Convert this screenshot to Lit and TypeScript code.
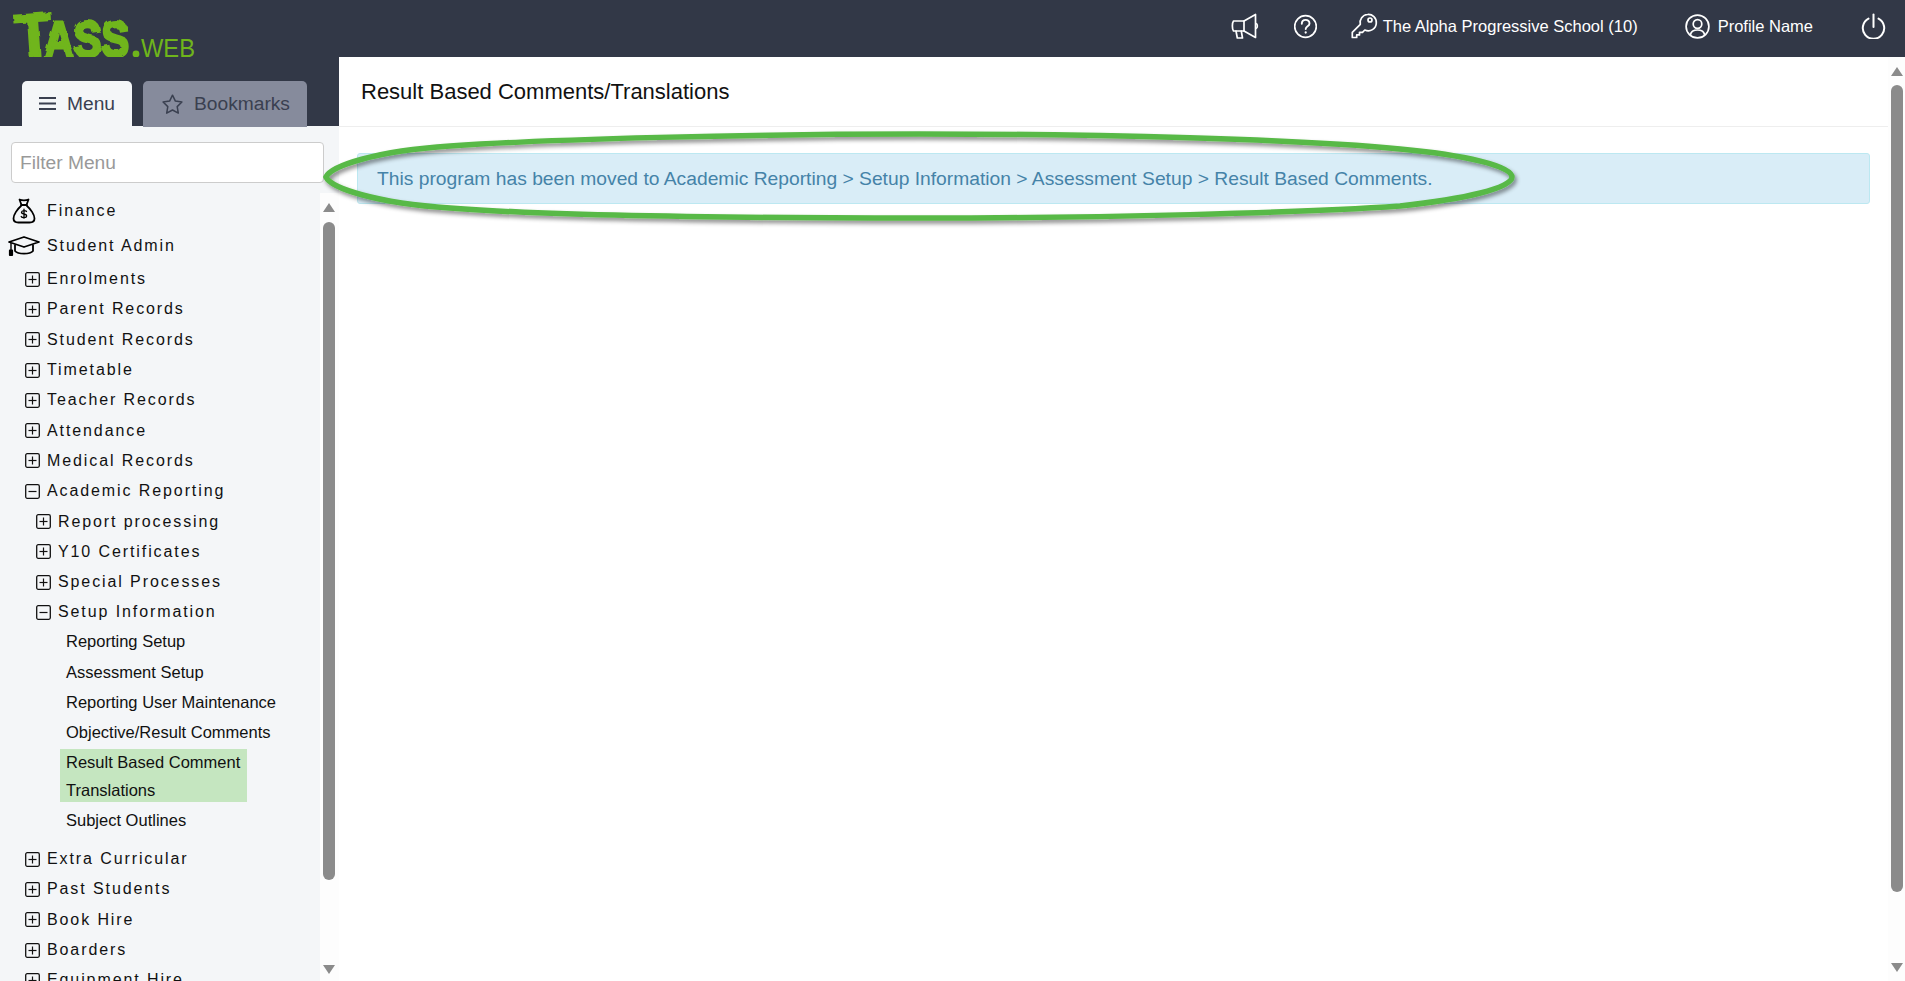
import { LitElement, html, css, svg } from "lit";
import { customElement } from "lit/decorators.js";

type Row = { t: string; k: "l1" | "l2" | "leaf" | "cur"; open?: boolean; gap?: boolean };

const rows: Row[] = [
  { t: "Enrolments", k: "l1" },
  { t: "Parent Records", k: "l1" },
  { t: "Student Records", k: "l1" },
  { t: "Timetable", k: "l1" },
  { t: "Teacher Records", k: "l1" },
  { t: "Attendance", k: "l1" },
  { t: "Medical Records", k: "l1" },
  { t: "Academic Reporting", k: "l1", open: true },
  { t: "Report processing", k: "l2" },
  { t: "Y10 Certificates", k: "l2" },
  { t: "Special Processes", k: "l2" },
  { t: "Setup Information", k: "l2", open: true },
  { t: "Reporting Setup", k: "leaf" },
  { t: "Assessment Setup", k: "leaf" },
  { t: "Reporting User Maintenance", k: "leaf" },
  { t: "Objective/Result Comments", k: "leaf" },
  { t: "Result Based Comment Translations", k: "cur" },
  { t: "Subject Outlines", k: "leaf" },
  { t: "Extra Curricular", k: "l1", gap: true },
  { t: "Past Students", k: "l1" },
  { t: "Book Hire", k: "l1" },
  { t: "Boarders", k: "l1" },
  { t: "Equipment Hire", k: "l1" },
];

const box = (open?: boolean) => html`<svg class="box" width="15" height="15" viewBox="0 0 15 15" fill="none" stroke="#111">
  <rect x=".7" y=".7" width="13.6" height="13.6" rx="1.5" stroke-width="1.3"></rect>
  <path d="M3.5 7.5h8" stroke-width="1.2"></path>
  ${open ? "" : svg`<path d="M7.5 3.5v8" stroke-width="1.2"></path>`}
</svg>`;

@customElement("app-root")
export class AppRoot extends LitElement {
  static styles = css`
    :host { display: block; position: relative; height: 981px; width: 1905px; overflow: hidden;
      font-family: "Liberation Sans", Arial, sans-serif; background: #fff; }
    .top { height: 57px; background: #323847; display: flex; align-items: center; color: #fff; }
    .logo { display: block; margin-left: 12px; align-self: flex-start; overflow: visible; }
    .logo text { font-family: "Liberation Sans", Arial, sans-serif; }
    .tools { margin-left: auto; display: flex; align-items: center; font-size: 16.5px; height: 100%; box-sizing: border-box; padding-bottom: 5px; }
    .tools svg { display: block; fill: none; stroke: #fff; stroke-width: 1.7; stroke-linecap: round; stroke-linejoin: round; }
    .megaphone { margin-right: 35px; }
    .help { margin-right: 34px; }
    .key { margin-right: 5px; }
    .school { margin-right: 47px; }
    .user { margin-right: 8px; }
    .name { margin-right: 48px; }
    .power { margin-right: 19px; }
    .body { display: flex; height: 924px; }
    .side { width: 339px; flex: none; display: flex; flex-direction: column; background: #f4f6f8; }
    .tabs { height: 69px; background: #323847; display: flex; align-items: flex-end; padding-left: 22px; gap: 11px; flex: none; }
    .tab { height: 45px; display: flex; align-items: center; box-sizing: border-box; border-radius: 5px 5px 0 0; font-size: 19.2px; color: #3a4050; }
    .tab.on { width: 110px; background: #f4f6f8; padding-left: 17px; gap: 11px; }
    .tab.off { width: 164px; height: 46px; margin-bottom: -1px; background: #868b9c; padding-left: 19px; gap: 11px; }
    .filter { height: 67px; flex: none; box-sizing: border-box; padding: 16px 15px 0 11px; }
    .filter input { display: block; box-sizing: border-box; width: 100%; height: 41px; border: 1px solid #ccc; border-radius: 4px;
      background: #fff; padding: 0 8px; font: 19.2px "Liberation Sans", Arial, sans-serif; outline: none; color: #333; }
    .filter input::placeholder { color: #999; opacity: 1; }
    .lower { flex: 1; min-height: 0; display: flex; }
    .list { width: 320px; flex: none; overflow: hidden; color: #111; font-size: 16px; }
    .item { display: flex; align-items: center; white-space: nowrap; letter-spacing: 1.9px; height: 30.3px; box-sizing: border-box; }
    .top-item { height: 35px; padding-left: 47px; position: relative; }
    .top-item svg { position: absolute; }
    .money { left: 12px; top: 5px; }
    .cap { left: 8px; top: 8px; }
    .l1 { padding: 2px 0 0 25px; gap: 7px; }
    .l2 { padding: 2px 0 0 36px; gap: 7px; }
    .gap { margin-top: 7.5px; }
    .leaf { padding-left: 66px; letter-spacing: 0; font-size: 16.5px; }
    .box { flex: none; }
    .cur { margin: 1.5px 0 3px 60px; width: 187px; height: 53px; box-sizing: border-box; padding: 0 6px; background: #c5e6c0; line-height: 27.7px; font-size: 16.5px; }
    .bar { background: #fdfdfd; display: flex; flex-direction: column; align-items: center; flex: none; }
    .side .bar { width: 19px; padding-top: 10px; padding-right: 1px; box-sizing: border-box; }
    .up { width: 0; height: 0; border: 6px solid transparent; border-top: 0; border-bottom: 9px solid #8b8b8b; flex: none; }
    .down { width: 0; height: 0; border: 6px solid transparent; border-bottom: 0; border-top: 9px solid #8b8b8b; flex: none; }
    .thumb { width: 12px; border-radius: 6px; background: #8b8b8b; flex: none; }
    .side .thumb { height: 658px; margin-top: 10px; }
    .side .down { margin-top: 85px; }
    .main { flex: 1; min-width: 0; display: flex; }
    .content { flex: 1; min-width: 0; }
    .title { height: 70px; box-sizing: border-box; border-bottom: 1px solid #eee; display: flex; align-items: center; padding-left: 22px; }
    .title h1 { margin: 0; font-size: 22px; font-weight: 400; color: #111; }
    .pad { padding: 26px 18px 0 18px; }
    .alert { height: 51px; box-sizing: border-box; background: #d9edf7; border: 1px solid #bce8f1; border-radius: 3px;
      display: flex; align-items: center; padding-left: 19px; font-size: 19.26px; color: #4583a8; }
    .main > .bar { width: 17px; padding-top: 10px; box-sizing: border-box; }
    .main .thumb { height: 807px; margin-top: 9px; }
    .main .down { margin-top: 71px; }
    .ring { position: absolute; left: 0; top: 0; pointer-events: none; overflow: visible; }
  `;

  render() {
    return html`
      <div class="top">
        <svg class="logo" width="190" height="62" viewBox="0 0 190 62">
          <defs>
            <filter id="rough" x="-5%" y="-10%" width="110%" height="120%">
              <feTurbulence type="fractalNoise" baseFrequency="0.12" numOctaves="2" seed="4"></feTurbulence>
              <feDisplacementMap in="SourceGraphic" scale="4"></feDisplacementMap>
            </filter>
          </defs>
          <g fill="#6fb51b" filter="url(#rough)">
            <text x="3" y="57" font-size="62" font-weight="700" stroke="#6fb51b" stroke-width="2" transform="rotate(-4 20 40)">T</text>
            <text x="32" y="57" font-size="50" font-weight="700" stroke="#6fb51b" stroke-width="3" textLength="85" lengthAdjust="spacingAndGlyphs">ASS</text>
          </g>
          <circle cx="124" cy="54" r="3.4" fill="#6fb51b"></circle>
          <text x="129" y="57" font-size="25" fill="#6fb51b" textLength="54" lengthAdjust="spacingAndGlyphs">WEB</text>
        </svg>
        <div class="tools">
          <svg class="megaphone" width="28" height="26" viewBox="0 0 28 26">
            <path d="M2.500 8h10.500v10H2.500C1 16 1 10 2.500 8z"></path>
            <path d="M13 8L24.500 1.500v23L13 18"></path>
            <path d="M25 10.500c1.800.5 1.800 4.500 0 5"></path>
            <path d="M5 18l1.300 7h5.200L10.300 18.200"></path>
          </svg>
          <svg class="help" width="23" height="25" viewBox="0 0 23 25">
            <circle cx="11.500" cy="12.500" r="10.800"></circle>
            <path d="M7.800 9.800c0-5.200 7.800-5 7.700-.4 0 3-3.800 2.800-3.800 5.700" stroke-width="1.900"></path>
            <path d="M11.700 18.300v.3" stroke-width="2.200"></path>
          </svg>
          <svg class="key" width="27" height="26" viewBox="0 0 27 26">
            <path d="M16.500 1.500a8 8 0 0 1 8.800 8.500 8 8 0 0 1-11.500 7l-2.300 2.300H8.500v2.600H5.700v2.600H1.300v-5.200l8-8a8 8 0 0 1 7.200-9.800z"></path>
            <circle cx="19" cy="7" r="2"></circle>
          </svg>
          <span class="school">The Alpha Progressive School (10)</span>
          <svg class="user" width="25" height="25" viewBox="0 0 25 25">
            <circle cx="12.500" cy="12.500" r="11.400"></circle>
            <circle cx="12.500" cy="10" r="4.300"></circle>
            <path d="M5.500 20.500c.5-3 2.500-4.500 7-4.500s6.500 1.500 7 4.500"></path>
          </svg>
          <span class="name">Profile Name</span>
          <svg class="power" width="25" height="26" viewBox="0 0 25 26">
            <path d="M7.500 5.600a10.700 10.700 0 1 0 10 0" stroke-width="2"></path>
            <path d="M12.500 1.500v12.500" stroke-width="2"></path>
          </svg>
        </div>
      </div>
      <div class="body">
        <div class="side">
          <div class="tabs">
            <div class="tab on">
              <svg width="17" height="15" viewBox="0 0 17 15" stroke="#3a4050" stroke-width="2"><path d="M0 2h17M0 7.500h17M0 13h17"></path></svg>
              <span>Menu</span>
            </div>
            <div class="tab off">
              <svg width="21" height="20" viewBox="0 0 21 20" fill="none" stroke="#3a4050" stroke-width="1.500" stroke-linejoin="round"><path d="M10.500 1.200l2.900 5.900 6.500.9-4.700 4.600 1.100 6.500-5.800-3.100-5.800 3.100 1.100-6.500L1.100 8l6.500-.9z"></path></svg>
              <span>Bookmarks</span>
            </div>
          </div>
          <div class="filter"><input placeholder="Filter Menu" /></div>
          <div class="lower">
            <div class="list">
              <div class="item top-item">
                <svg class="money" width="24" height="26" viewBox="0 0 24 26" fill="none" stroke="#000" stroke-width="1.800" stroke-linejoin="round" stroke-linecap="round">
                  <path d="M7.500 1.500c2.500 1 6.500 1 9 0l-2 5.500h-5z"></path>
                  <path d="M9 7.200h6"></path>
                  <path d="M9 8c-3.500 3-7.500 8.500-7.500 12.500 0 3.500 2.500 4 5 4h11c2.500 0 5-.5 5-4 0-4-4-9.500-7.500-12.500"></path>
                  <path d="M14.500 13.500c-.5-1.300-4.800-1.500-5 .7-.2 2.400 5.300 1.200 5.100 3.800-.2 2.200-4.800 2-5.400.5M12 11.200v9" stroke-width="1.300"></path>
                </svg>
                <span>Finance</span>
              </div>
              <div class="item top-item">
                <svg class="cap" width="32" height="20" viewBox="0 0 32 20" fill="none" stroke="#000" stroke-width="1.800" stroke-linejoin="round">
                  <path d="M16 1L31 6 16 11 1 6z"></path>
                  <path d="M7 8.500v6.500c3 3.500 15 3.500 18 0V8.500"></path>
                  <path d="M3 6.500v8" stroke-width="1.400"></path>
                  <path d="M1.800 14.500h2.400v4.500H1.800z" fill="#000"></path>
                </svg>
                <span>Student Admin</span>
              </div>
              ${rows.map((r) => {
                if (r.k === "leaf") return html`<div class="item leaf">${r.t}</div>`;
                if (r.k === "cur") return html`<div class="cur">${r.t}</div>`;
                return html`<div class="item ${r.k} ${r.gap ? "gap" : ""}">${box(r.open)}<span>${r.t}</span></div>`;
              })}
            </div>
            <div class="bar"><div class="up"></div><div class="thumb"></div><div class="down"></div></div>
          </div>
        </div>
        <div class="main">
          <div class="content">
            <div class="title"><h1>Result Based Comments/Translations</h1></div>
            <div class="pad">
              <div class="alert">This program has been moved to Academic Reporting &gt; Setup Information &gt; Assessment Setup &gt; Result Based Comments.</div>
            </div>
          </div>
          <div class="bar"><div class="up"></div><div class="thumb"></div><div class="down"></div></div>
        </div>
      </div>
      <svg class="ring" width="1905" height="981" viewBox="0 0 1905 981" fill="none">
        <defs><filter id="sh" x="-2%" y="-20%" width="104%" height="140%"><feDropShadow dx="2" dy="3" stdDeviation="2" flood-color="#000" flood-opacity=".45"></feDropShadow></filter></defs>
        <path d="M326 177C331 166 375 151 450 146C550 139 750 134 919 134C1100 134 1300 139 1400 149C1465 155 1512 166 1512 177C1512 188 1465 199 1400 206C1300 213 1100 218 919 218C750 218 550 216 450 208C375 203 331 188 326 177Z" stroke="#58b947" stroke-width="5.500" filter="url(#sh)"></path>
      </svg>
    `;
  }
}
